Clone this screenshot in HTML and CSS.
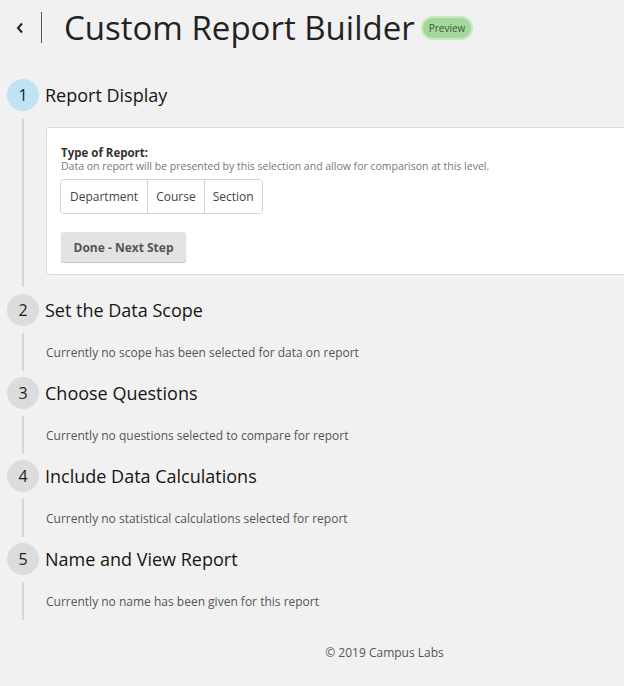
FILE: index.html
```html
<!DOCTYPE html>
<html>
<head>
<meta charset="utf-8">
<link rel="stylesheet" href="styles.css">
</head>
<body>
<div class="page">
  <header class="header">
    <a class="back" href="#"><svg width="10" height="14" viewBox="0 0 10 14"><path d="M7 2.5 L3 7 L7 11.5" fill="none" stroke="#222" stroke-width="2"/></svg></a>
    <span class="divider"></span>
    <h1 class="title">Custom Report Builder</h1>
    <span class="badge">Preview</span>
  </header>

  <div class="steps">
    <section class="step active">
      <div class="step-head"><span class="num">1</span><h2 class="step-title">Report Display</h2></div>
      <div class="step-body">
        <div class="card">
          <div class="label">Type of Report:</div>
          <div class="desc">Data on report will be presented by this selection and allow for comparison at this level.</div>
          <div class="btn-group">
            <button class="seg seg-wide">Department</button><button class="seg">Course</button><button class="seg">Section</button>
          </div>
          <button class="next">Done - Next Step</button>
        </div>
      </div>
    </section>
    <section class="step">
      <div class="step-head"><span class="num">2</span><h2 class="step-title">Set the Data Scope</h2></div>
      <div class="step-body"><p class="empty">Currently no scope has been selected for data on report</p></div>
    </section>
    <section class="step">
      <div class="step-head"><span class="num">3</span><h2 class="step-title">Choose Questions</h2></div>
      <div class="step-body"><p class="empty">Currently no questions selected to compare for report</p></div>
    </section>
    <section class="step">
      <div class="step-head"><span class="num">4</span><h2 class="step-title">Include Data Calculations</h2></div>
      <div class="step-body"><p class="empty">Currently no statistical calculations selected for report</p></div>
    </section>
    <section class="step">
      <div class="step-head"><span class="num">5</span><h2 class="step-title">Name and View Report</h2></div>
      <div class="step-body"><p class="empty">Currently no name has been given for this report</p></div>
    </section>
  </div>

  <footer class="footer">© 2019 Campus Labs</footer>
</div>
</body>
</html>
```
FILE: styles.css
```css
html, body {
  margin: 0;
  padding: 0;
  background: #f1f1f1;
  overflow: hidden;
}
body {
  font-family: "Open Sans", "Noto Sans", sans-serif;
  color: #222;
}
.page {
  width: 624px;
  height: 686px;
  overflow: hidden;
}
.header {
  display: flex;
  align-items: center;
  height: 55px;
  padding-left: 14px;
}
.back {
  display: flex;
  width: 12px;
  height: 14px;
  align-items: center;
  justify-content: center;
}
.divider {
  width: 1px;
  height: 31px;
  background: #555;
  margin-left: 15px;
}
.title {
  margin: 0 0 0 22px;
  font-size: 33px;
  font-weight: 400;
  color: #222;
}
.badge {
  margin-left: 6px;
  height: 20px;
  padding: 0 6px;
  display: flex;
  align-items: center;
  border-radius: 12px;
  background: #a2d99a;
  border: 2px solid #c6e9c1;
  font-size: 10px;
  color: #3c5a3a;
}
.steps {
  padding-left: 7px;
  margin-top: 24px;
}
.step-head {
  display: flex;
  align-items: center;
  height: 32px;
}
.num {
  width: 32px;
  height: 32px;
  border-radius: 50%;
  background: #dcdcdc;
  display: flex;
  align-items: center;
  justify-content: center;
  font-size: 16px;
  color: #1e1e1e;
}
.active .num {
  background: #bfe3f5;
}
.step-title {
  margin: 0 0 0 6px;
  font-size: 18px;
  font-weight: 400;
  color: #151515;
}
.step-body {
  margin: 7px 0 6px 15px;
  border-left: 2px solid #d6d6d6;
  min-height: 38px;
  padding-left: 22px;
  display: flex;
  align-items: center;
}
.active .step-body {
  margin-top: 8px;
  margin-bottom: 7px;
  padding-top: 8px;
  padding-bottom: 12px;
  display: block;
}
.empty {
  margin: 0;
  font-size: 12px;
  color: #555;
}
.card {
  width: 620px;
  height: 148px;
  box-sizing: border-box;
  background: #fff;
  border: 1px solid #dcdcdc;
  border-radius: 3px;
  padding: 18px 14px 0;
}
.label {
  font-size: 11.5px;
  font-weight: 700;
  color: #333;
  line-height: 14px;
}
.desc {
  font-size: 10.5px;
  color: #777;
  line-height: 13px;
}
.btn-group {
  display: inline-flex;
  margin-top: 6px;
  margin-left: -1px;
  border: 1px solid #d3d3d3;
  border-radius: 4px;
  background: #fff;
  overflow: hidden;
}
.seg {
  font-family: inherit;
  font-size: 12px;
  color: #444;
  background: #fff;
  border: 0;
  border-left: 1px solid #d3d3d3;
  height: 33px;
  padding: 0 8px;
  margin: 0;
}
.seg-wide {
  padding: 0 9px;
}
.seg:first-child {
  border-left: 0;
}
.next {
  display: block;
  margin-top: 18px;
  margin-left: 0;
  font-family: inherit;
  font-size: 12px;
  font-weight: 700;
  color: #555;
  background: #e3e3e3;
  border: 0;
  border-radius: 3px;
  box-shadow: 0 1px 1px rgba(0,0,0,0.25);
  height: 30px;
  width: 125px;
  padding: 0;
}
.footer {
  margin-top: 24px;
  padding-left: 145px;
  text-align: center;
  font-size: 12px;
  color: #555;
}
```
